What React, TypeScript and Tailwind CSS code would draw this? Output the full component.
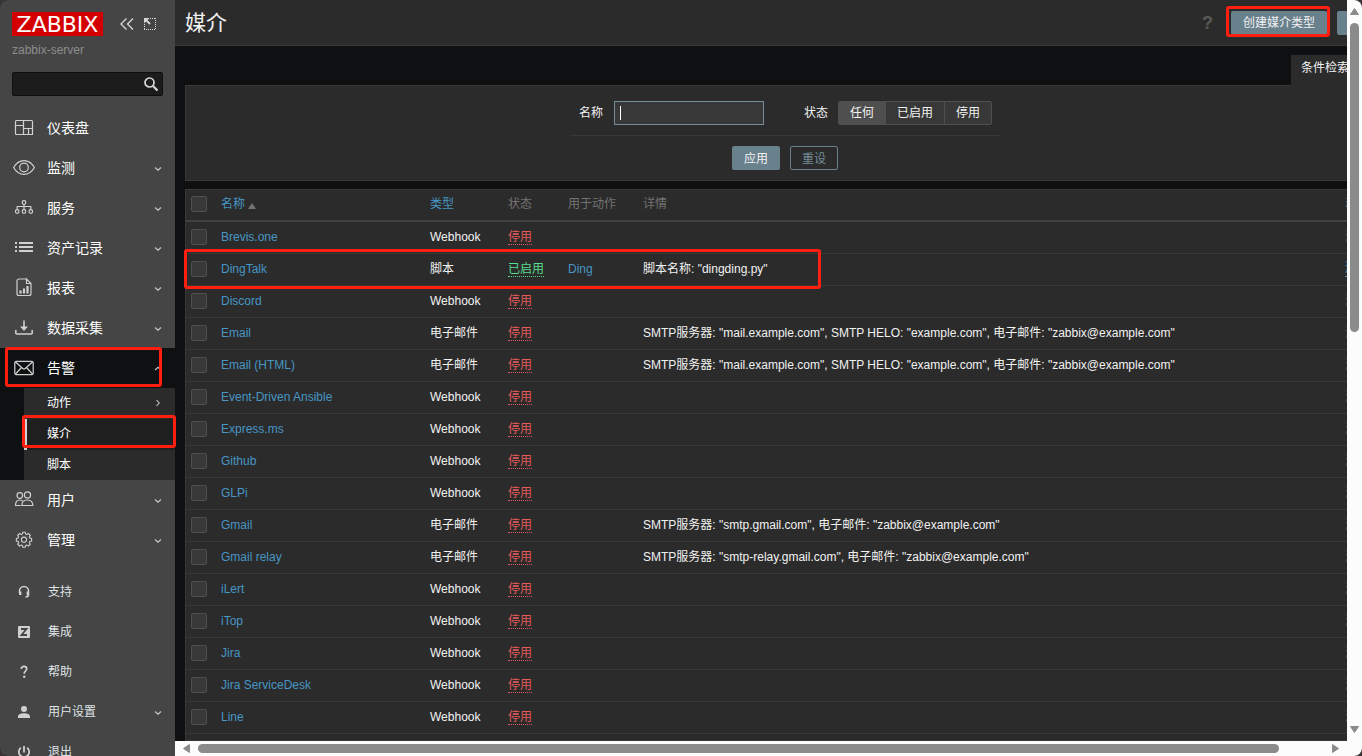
import React from 'react';

type IconProps = { children: React.ReactNode; className?: string };

const Icon: React.FC<IconProps> = ({ children, className = 'size-6' }) => (
  <svg
    viewBox="0 0 24 24"
    className={`shrink-0 ${className}`}
    fill="none"
    stroke="currentColor"
    strokeWidth="1.2"
    aria-hidden="true"
  >
    {children}
  </svg>
);

const icons: Record<string, React.ReactNode> = {
  dashboard: (
    <path d="M4.5 4.5h15a1 1 0 0 1 1 1v13h-16a1 1 0 0 1-1-1v-12a1 1 0 0 1 1-1zM11.500 4.500v14M3.500 9.500h8M11.500 12.500h9M16.500 12.500v6" />
  ),
  eye: (
    <>
      <path d="M1.600 11.500C4.200 6.900 7.800 4.600 12 4.600s7.800 2.300 10.400 6.900c-2.600 4.600-6.200 6.900-10.400 6.900S4.200 16.100 1.600 11.500z" />
      <circle cx="12" cy="11.500" r="4.300" />
    </>
  ),
  services: (
    <>
      <circle cx="12" cy="6.500" r="1.800" />
      <circle cx="5.200" cy="15.500" r="1.800" />
      <circle cx="12" cy="15.500" r="1.800" />
      <circle cx="18.800" cy="15.500" r="1.800" />
      <path d="M12 8.300v5.400M5.200 13.700v-3.200h13.600v3.200" />
    </>
  ),
  list: (
    <path strokeWidth="1.800" d="M3 7h2M3 11h2M3 15h2M7 7h14M7 11h14M7 15h14" />
  ),
  report: (
    <>
      <path d="M14.500 3H7a2 2 0 0 0-2 2v12.500a2 2 0 0 0 2 2h10a2 2 0 0 0 2-2V7.500L14.500 3v4.500H19" />
      <path strokeWidth="2.200" d="M8.500 17.500v-3M12 17.500v-5M15.500 17.500v-7.500" />
    </>
  ),
  download: (
    <>
      <path strokeWidth="1.600" d="M12 4.500v8M3.800 14v3a1 1 0 0 0 1 1h14.400a1 1 0 0 0 1-1v-3" />
      <path fill="currentColor" stroke="none" d="M8 10.500h8L12 15z" />
    </>
  ),
  mail: (
    <>
      <rect x="2.800" y="5.300" width="18.400" height="13.400" rx="1.500" />
      <path d="M3.500 6l7 6.200a2.200 2.200 0 0 0 3 0l7-6.200M3.500 18l6-6.500M20.500 18l-6-6.500" />
    </>
  ),
  users: (
    <>
      <circle cx="7.800" cy="7.500" r="2.800" />
      <circle cx="15.500" cy="7" r="3.100" />
      <path d="M9.800 17.500c0-3.500 2-5.500 5.500-5.500s5.500 2 5.500 5.500zM8.500 17.500h-5c0-3.500 1.200-5.500 4.300-5.500 1.200 0 2 .3 2.700.8" />
    </>
  ),
  gear: (
    <g transform="translate(1.300 .2) scale(.89)">
      <path d="M10.600 4.500h2.800l.5 2.100 1.300.5 1.900-1.100 2 2-1.100 1.800.5 1.300 2.100.5v2.800l-2.100.5-.5 1.300 1.100 1.800-2 2-1.900-1.100-1.300.5-.5 2.100h-2.800l-.5-2.100-1.300-.5-1.900 1.100-2-2L6 16.200l-.5-1.300-2.100-.5v-2.800l2.100-.5.500-1.300L4.900 8l2-2 1.900 1.100 1.300-.5z" />
      <circle cx="12" cy="12.900" r="2.900" />
    </g>
  ),
  headset: (
    <>
      <path strokeWidth="1.600" d="M7.500 13v-2a4.500 4.500 0 0 1 9 0v3.500c0 1.600-1 2.500-3 2.500" />
      <path strokeWidth="2.400" d="M8.200 11.500v3.500M15.800 11.500v3.500" />
    </>
  ),
  integrations: (
    <>
      <rect x="6" y="6" width="12" height="12" rx="1" fill="currentColor" stroke="none" />
      <path stroke="#454545" strokeWidth="1.800" d="M9 9h5.500L9.500 15H15" />
    </>
  ),
  help: (
    <>
      <path strokeWidth="1.700" d="M9.300 9c0-1.600 1-2.700 2.700-2.700s2.700 1 2.700 2.500c0 2.200-2.500 2.300-2.500 4.900" />
      <circle cx="12.200" cy="16.700" r="1.200" fill="currentColor" stroke="none" />
    </>
  ),
  user: (
    <path fill="currentColor" stroke="none" d="M12 6a3 3 0 1 1 0 6 3 3 0 0 1 0-6zM6 18v-1.500c0-2 3-3.200 6-3.200s6 1.200 6 3.200V18z" />
  ),
  power: (
    <path strokeWidth="1.800" d="M12 6v6.500M8.800 7.800a5.200 5.200 0 1 0 6.400 0" />
  ),
};

const mainMenu = [
  { icon: 'dashboard', label: '仪表盘', expandable: false },
  { icon: 'eye', label: '监测', expandable: true },
  { icon: 'services', label: '服务', expandable: true },
  { icon: 'list', label: '资产记录', expandable: true },
  { icon: 'report', label: '报表', expandable: true },
  { icon: 'download', label: '数据采集', expandable: true },
  { icon: 'mail', label: '告警', expandable: true, active: true },
  { icon: 'users', label: '用户', expandable: true },
  { icon: 'gear', label: '管理', expandable: true },
];

const alertMenu = [
  { label: '动作', more: true },
  { label: '媒介', selected: true },
  { label: '脚本' },
];

const userMenu = [
  { icon: 'headset', label: '支持' },
  { icon: 'integrations', label: '集成' },
  { icon: 'help', label: '帮助' },
  { icon: 'user', label: '用户设置', expandable: true },
  { icon: 'power', label: '退出' },
];

type MediaType = {
  name: string;
  type: string;
  enabled?: boolean;
  action?: string;
  details?: string;
};

const defaultMail =
  'SMTP服务器: "mail.example.com", SMTP HELO: "example.com", 电子邮件: "zabbix@example.com"';

const mediaTypes: MediaType[] = [
  { name: 'Brevis.one', type: 'Webhook' },
  { name: 'DingTalk', type: '脚本', enabled: true, action: 'Ding', details: '脚本名称: "dingding.py"' },
  { name: 'Discord', type: 'Webhook' },
  { name: 'Email', type: '电子邮件', details: defaultMail },
  { name: 'Email (HTML)', type: '电子邮件', details: defaultMail },
  { name: 'Event-Driven Ansible', type: 'Webhook' },
  { name: 'Express.ms', type: 'Webhook' },
  { name: 'Github', type: 'Webhook' },
  { name: 'GLPi', type: 'Webhook' },
  { name: 'Gmail', type: '电子邮件', details: 'SMTP服务器: "smtp.gmail.com", 电子邮件: "zabbix@example.com"' },
  { name: 'Gmail relay', type: '电子邮件', details: 'SMTP服务器: "smtp-relay.gmail.com", 电子邮件: "zabbix@example.com"' },
  { name: 'iLert', type: 'Webhook' },
  { name: 'iTop', type: 'Webhook' },
  { name: 'Jira', type: 'Webhook' },
  { name: 'Jira ServiceDesk', type: 'Webhook' },
  { name: 'Line', type: 'Webhook' },
];

// Small arrow at the right edge of a menu item
const Chevron: React.FC<{ direction?: 'down' | 'up' | 'right' }> = ({ direction = 'down' }) => {
  const paths = {
    down: 'M2 4.500l3 2.700 3-2.700',
    up: 'M2 7l3-2.700L8 7',
    right: 'M3.500 2l2.700 3-2.700 3',
  };
  return (
    <svg viewBox="0 0 10 10" className="ml-auto size-2.5 shrink-0 text-[#c8c8c8]" fill="none" stroke="currentColor" strokeWidth="1.1" aria-hidden="true">
      <path d={paths[direction]} />
    </svg>
  );
};

// Red frame drawn over the element it points out
const Highlight: React.FC<{ className: string }> = ({ className }) => (
  <div className={`pointer-events-none absolute z-20 rounded-[3px] border-3 border-[#ff1e10] ${className}`} />
);

const Checkbox: React.FC<{ label: string }> = ({ label }) => (
  <input
    type="checkbox"
    aria-label={label}
    className="block size-4 appearance-none rounded-xs border border-[#4f4f4f] bg-[#383838] checked:bg-[#69808d]"
  />
);

const Sidebar: React.FC = () => (
  <aside className="relative z-10 flex w-[175px] shrink-0 flex-col bg-[#454545] text-[#d8d8d8]">
    <div className="flex h-9 shrink-0 items-end pl-3">
      <a
        href="#"
        className="flex h-6 w-[91px] items-center justify-center bg-[#d40000] pt-px font-['DejaVu_Sans',sans-serif] text-[22px] leading-6 text-white"
      >
        ZABBIX
      </a>
      <button aria-label="折叠侧边栏" className="ml-4 flex h-6 w-4 items-center justify-center">
        <svg viewBox="0 0 16 14" className="h-3.5 w-4" fill="none" stroke="currentColor" strokeWidth="1.3">
          <path d="M7.500 1.500L2 7l5.500 5.500M14 1.500L8.500 7l5.500 5.500" />
        </svg>
      </button>
      <button aria-label="隐藏侧边栏" className="ml-2 flex h-6 w-3.5 items-center justify-center">
        <svg viewBox="0 0 14 14" className="size-3.5" fill="none" stroke="currentColor">
          <path strokeDasharray="1 1" d="M7 1.500h6M12.500 1v12M1 12.500h12M1.500 7v6" />
          <path fill="currentColor" stroke="none" d="M1 1h5.500L1 6.500z" />
          <path strokeWidth="1.800" d="M3 3l4 4" />
        </svg>
      </button>
    </div>
    <div className="mt-1.5 pl-3 text-xs leading-4 text-[#8d8d8d]">zabbix-server</div>
    <form className="relative mx-3 mt-3.5 mb-3">
      <input
        type="text"
        aria-label="搜索"
        className="block h-6 w-full rounded-xs border border-[#0a1114] bg-[#1c1c1c] pr-7 pl-1.5 text-xs outline-none"
      />
      <button type="button" aria-label="搜索" className="absolute top-0 right-0 flex h-6 w-6 items-center justify-center">
        <svg viewBox="0 0 16 16" className="size-4" fill="none" stroke="currentColor" strokeWidth="1.700">
          <circle cx="6.500" cy="6.500" r="4.500" />
          <path strokeWidth="2.200" d="M10 10l4.500 4.500" />
        </svg>
      </button>
    </form>

    <nav className="text-sm text-white">
      {mainMenu.map((item) => (
        <div key={item.label} className={item.active ? 'bg-[#0e1012]' : ''}>
          <a href="#" className="relative flex h-10 items-center pr-3 pl-3">
            <span className="flex text-[#d0d0d0]">
              <Icon>{icons[item.icon]}</Icon>
            </span>
            <span className="ml-[11px]">{item.label}</span>
            {item.expandable && <Chevron direction={item.active ? 'up' : 'down'} />}
            {item.active && <Highlight className="-top-px right-[13px] bottom-px left-[5px]" />}
          </a>
          {item.active && (
            <ul className="ml-6 h-[92px] bg-[#2b2b2b] text-xs">
              {alertMenu.map((sub) => (
                <li key={sub.label} className="relative">
                  <a
                    href="#"
                    className={
                      sub.selected
                        ? 'flex h-[31px] items-center border-l-3 border-[#d0d0d0] bg-[#1f1f1f] pr-3 pb-0.5 pl-5'
                        : 'flex h-[31px] items-center pr-3 pb-0.5 pl-[23px]'
                    }
                  >
                    {sub.label}
                    {sub.more && <Chevron direction="right" />}
                  </a>
                  {sub.selected && <Highlight className="-top-1 -right-px bottom-0.5 -left-0.5" />}
                </li>
              ))}
            </ul>
          )}
        </div>
      ))}
    </nav>

    <nav className="mt-3 text-xs text-[#dfe4e7]">
      {userMenu.map((item) => (
        <a key={item.label} href="#" className="flex h-10 items-center px-3">
          <span className="flex text-[#d0d0d0]">
            <Icon>{icons[item.icon]}</Icon>
          </span>
          <span className="ml-3">{item.label}</span>
          {item.expandable && <Chevron />}
        </a>
      ))}
    </nav>
  </aside>
);

const PageHeader: React.FC = () => (
  <header className="flex h-[46px] items-center border-b border-[#383838] bg-[#2b2b2b] px-2.5 pt-px">
    <h1 className="text-[21px] leading-8 text-[#f2f2f2]">媒介</h1>
    <a href="#" aria-label="帮助" className="ml-auto text-lg leading-6 font-bold text-[#5a5a5a]">
      ?
    </a>
    <div className="relative ml-[18px]">
      <button className="block h-6 rounded-xs bg-[#69808d] px-3 text-xs text-[#f2f2f2]">创建媒介类型</button>
      <Highlight className="-top-[5px] -right-[3px] -bottom-0.5 -left-[5px]" />
    </div>
    <button className="ml-2.5 h-6 rounded-xs bg-[#69808d] px-3 text-xs text-[#f2f2f2]">导入</button>
  </header>
);

const Filter: React.FC = () => (
  <section className="mt-[9px]">
    <div className="flex justify-end">
      <button className="relative -mb-px flex h-[31px] w-[94px] items-center gap-2 bg-[#2b2b2b] px-2.5 pb-1.5 text-xs text-[#f2f2f2]">
        <span className="whitespace-nowrap">条件检索</span>
        <svg viewBox="0 0 12 12" className="size-3 shrink-0" fill="currentColor" aria-hidden="true">
          <path d="M0 1h12L7.500 6v5l-3-1.500V6z" />
        </svg>
      </button>
    </div>
    <form className="flex flex-col items-center border border-[#383838] bg-[#2b2b2b] pt-[15px] pb-2.5 text-xs text-[#f2f2f2]">
      <div className="flex w-[430px] items-center border-b border-[#383838] pr-2 pb-2.5 pl-[9px]">
        <label htmlFor="filter_name">名称</label>
        <div className="relative ml-[11px]">
          <input
            id="filter_name"
            type="text"
            className="block h-6 w-[150px] border border-[#768d99] bg-[#383838] px-[5px] outline-none"
          />
          <span className="absolute top-[5px] left-1.5 h-3.5 w-px bg-white" />
        </div>
        <fieldset className="ml-10 flex items-center">
          <legend className="float-left mr-2.5">状态</legend>
          <div className="flex h-6 rounded-xs border border-[#4f4f4f] bg-[#383838]">
            <label className="flex items-center px-[11px] has-checked:bg-[#4f4f4f]">
              <input type="radio" name="status" defaultChecked className="sr-only" />
              任何
            </label>
            <label className="flex items-center border-l border-[#4f4f4f] px-[11px] has-checked:bg-[#4f4f4f]">
              <input type="radio" name="status" className="sr-only" />
              已启用
            </label>
            <label className="flex items-center border-l border-[#4f4f4f] px-[11px] has-checked:bg-[#4f4f4f]">
              <input type="radio" name="status" className="sr-only" />
              停用
            </label>
          </div>
        </fieldset>
      </div>
      <div className="flex gap-2.5 pt-2.5">
        <button type="button" className="h-6 w-12 rounded-xs bg-[#69808d] pt-0.5 text-[#f2f2f2]">
          应用
        </button>
        <button type="button" className="h-6 w-12 rounded-xs border border-[#69808d] pt-0.5 text-[#768d99]">
          重设
        </button>
      </div>
    </form>
  </section>
);

const MediaTable: React.FC = () => (
  <div className="relative mt-2 flex-1 border border-[#383838] bg-[#2b2b2b]">
    <table className="w-full table-fixed border-separate border-spacing-0 text-left text-xs text-[#f2f2f2]">
      <colgroup>
        <col className="w-[29px]" />
        <col className="w-[209px]" />
        <col className="w-[78px]" />
        <col className="w-[60px]" />
        <col className="w-[75px]" />
        <col />
        <col className="w-[45px]" />
      </colgroup>
      <thead>
        <tr className="h-8 text-[#737373] *:border-b-2 *:border-[#414141] *:px-1.5 *:pt-0 *:pb-0.5 *:font-normal *:whitespace-nowrap">
          <th>
            <div className="-ml-px">
              <Checkbox label="全选" />
            </div>
          </th>
          <th>
            <a href="#" className="flex items-center gap-[3px] text-[#4796c4]">
              名称
              <svg viewBox="0 0 8 6" className="mt-1 h-1.5 w-2" fill="#737373" aria-hidden="true">
                <path d="M4 0l4 6H0z" />
              </svg>
            </a>
          </th>
          <th>
            <a href="#" className="text-[#4796c4]">类型</a>
          </th>
          <th>状态</th>
          <th>用于动作</th>
          <th>详情</th>
          <th>动作</th>
        </tr>
      </thead>
      <tbody>
        {mediaTypes.map((media) => (
          <tr key={media.name} className="h-8 *:border-b *:border-[#383838] *:px-1.5 *:pt-0 *:pb-0.5 *:whitespace-nowrap">
            <td>
              <div className="-ml-px">
                <Checkbox label={media.name} />
              </div>
            </td>
            <td>
              <a href="#" className="text-[#4796c4]">{media.name}</a>
            </td>
            <td>{media.type}</td>
            <td>
              {media.enabled ? (
                <a href="#" className="border-b border-dotted border-[#59db8f] text-[#59db8f]">已启用</a>
              ) : (
                <a href="#" className="border-b border-dotted border-[#e45959] text-[#e45959]">停用</a>
              )}
            </td>
            <td>{media.action && <a href="#" className="text-[#4796c4]">{media.action}</a>}</td>
            <td>{media.details}</td>
            <td>
              <button className={media.enabled ? 'border-b border-[#4796c4] text-[#4796c4]' : 'text-[#5a5a5a]'}>测试</button>
            </td>
          </tr>
        ))}
      </tbody>
    </table>
    <Highlight className="top-[59px] -left-0.5 h-10 w-[637px]" />
  </div>
);

const VerticalScrollbar: React.FC = () => (
  <div className="flex flex-col items-center bg-[#fcfcfc] text-[#8b8b8b]">
    <svg viewBox="0 0 15 23" className="h-[23px] w-[15px] shrink-0" fill="currentColor" stroke="currentColor" strokeLinejoin="round">
      <path d="M7.500 8.500L11.500 14.500h-8z" />
    </svg>
    <div className="flex-1">
      <div className="h-[44.5%] w-[9px] rounded-full bg-[#8b8b8b]" />
    </div>
    <svg viewBox="0 0 15 23" className="h-[23px] w-[15px] shrink-0" fill="currentColor" stroke="currentColor" strokeLinejoin="round">
      <path d="M7.500 14.500L11.500 8.500h-8z" />
    </svg>
  </div>
);

const HorizontalScrollbar: React.FC = () => (
  <div className="flex items-center bg-[#fcfcfc] text-[#8b8b8b]">
    <svg viewBox="0 0 23 15" className="h-[15px] w-[23px] shrink-0" fill="currentColor" stroke="currentColor" strokeLinejoin="round">
      <path d="M8.500 7.500L14.500 3.500v8z" />
    </svg>
    <div className="flex-1">
      <div className="h-[9px] w-[96%] rounded-full bg-[#8b8b8b]" />
    </div>
    <svg viewBox="0 0 23 15" className="h-[15px] w-[23px] shrink-0" fill="currentColor" stroke="currentColor" strokeLinejoin="round">
      <path d="M14.500 7.500L8.500 3.500v8z" />
    </svg>
  </div>
);

const App: React.FC = () => {
  return (
    <div className="h-screen bg-[#383436] font-['Liberation_Sans','Noto_Sans_CJK_SC',sans-serif]">
      <div className="flex h-full overflow-hidden rounded-lg bg-[#0e1012]">
        <Sidebar />
        <div className="grid min-w-0 flex-1 grid-cols-[minmax(0,1fr)_15px] grid-rows-[minmax(0,1fr)_15px]">
          <div className="overflow-hidden">
            <div className="flex min-h-full min-w-[1220px] flex-col">
              <PageHeader />
              <main className="flex flex-1 flex-col px-2.5">
                <Filter />
                <MediaTable />
              </main>
            </div>
          </div>
          <VerticalScrollbar />
          <HorizontalScrollbar />
          <div className="bg-[#fcfcfc]" />
        </div>
      </div>
    </div>
  );
};

export default App;
